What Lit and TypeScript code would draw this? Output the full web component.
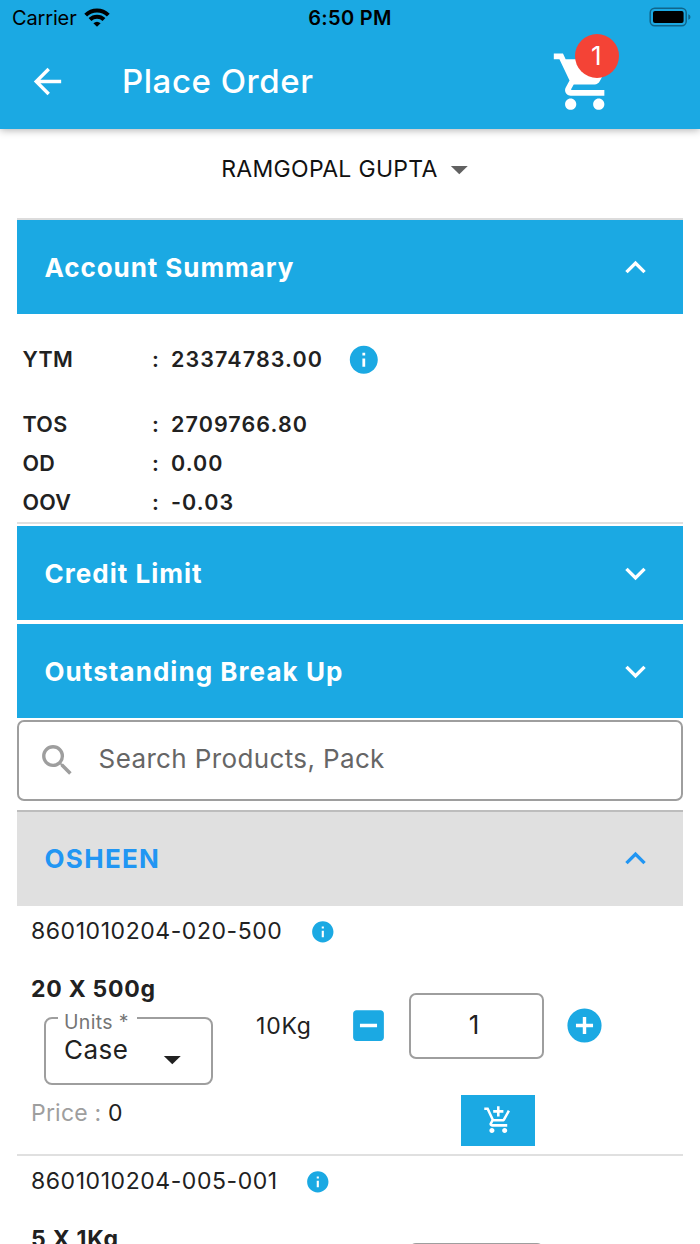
import { LitElement, html, css, svg } from "lit";

const ICONS = {
  back: "M20 11H7.83l5.59-5.59L12 4l-8 8 8 8 1.41-1.41L7.83 13H20v-2z",
  cart: "M7 18c-1.1 0-1.99.9-1.99 2S5.9 22 7 22s2-.9 2-2-.9-2-2-2zM1 2v2h2l3.6 7.59-1.35 2.45c-.16.28-.25.61-.25.96 0 1.1.9 2 2 2h12v-2H7.42c-.14 0-.25-.11-.25-.25l.03-.12.9-1.63h7.45c.75 0 1.41-.41 1.75-1.03l3.58-6.49A1.003 1.003 0 0 0 20 4H5.21l-.94-2H1zm16 16c-1.1 0-1.99.9-1.99 2s.89 2 1.99 2 2-.9 2-2-.9-2-2-2z",
  up: "M12 8l-6 6 1.41 1.41L12 10.83l4.59 4.58L18 14z",
  down: "M16.59 8.59L12 13.17 7.41 8.59 6 10l6 6 6-6z",
  info: "M12 2C6.48 2 2 6.48 2 12s4.48 10 10 10 10-4.48 10-10S17.52 2 12 2zm1 15h-2v-6h2v6zm0-8h-2V7h2v2z",
  search: "M15.5 14h-.79l-.28-.27A6.471 6.471 0 0 0 16 9.5 6.5 6.5 0 1 0 9.5 16c1.61 0 3.09-.59 4.23-1.57l.27.28v.79l5 4.99L20.49 19l-4.99-5zm-6 0C7.01 14 5 11.99 5 9.5S7.01 5 9.5 5 14 7.01 14 9.5 11.99 14 9.5 14z",
  dropdown: "M7 10l5 5 5-5z",
  minus: "M19 3H5c-1.11 0-2 .9-2 2v14c0 1.1.89 2 2 2h14c1.1 0 2-.9 2-2V5c0-1.1-.9-2-2-2zm-2 10H7v-2h10v2z",
  plus: "M12 2C6.48 2 2 6.48 2 12s4.48 10 10 10 10-4.48 10-10S17.52 2 12 2zm5 11h-4v4h-2v-4H7v-2h4V7h2v4h4v2z",
  addCart: "M11 9h2V6h3V4h-3V1h-2v3H8v2h3v3zm-4 9c-1.1 0-1.99.9-1.99 2S5.9 22 7 22s2-.9 2-2-.9-2-2-2zm10 0c-1.1 0-1.99.9-1.99 2s.89 2 1.99 2 2-.9 2-2-.9-2-2-2zm-9.83-3.25l.03-.12.9-1.63h7.45c.75 0 1.41-.41 1.75-1.03l3.86-7.01L19.42 4h-.01l-1.1 2-2.76 5H8.53l-.13-.27L6.16 6l-.95-2-.94-2H1v2h2l3.6 7.59-1.35 2.45c-.16.28-.25.61-.25.96 0 1.1.9 2 2 2h12v-2H7.42c-.13 0-.25-.11-.25-.25z",
};

const icon = (name: keyof typeof ICONS, cls = "") =>
  html`<svg class="icon ${cls}" viewBox="0 0 24 24">${svg`<path d=${ICONS[name]} />`}</svg>`;

interface Product { code: string; pack: string; weight: string; unit: string; qty: number; price: number; }

class ProductItem extends LitElement {
  static properties = { product: { attribute: false } };
  declare product: Product;

  static styles = css`
    :host { display: block; height: 248px; border-bottom: 2px solid #e0e0e0; color: #212121; font-size: 23px; line-height: 28px; }
    .icon { display: block; flex: none; fill: #1ba9e3; }
    .code-row { display: flex; align-items: center; height: 50px; padding: 0 0 2px 14px; }
    .code { letter-spacing: 0.56px; }
    .info { width: 25.6px; height: 25.6px; margin-left: 27.7px; margin-top: 2px; }
    .body { display: flex; align-items: flex-start; height: 196px; padding-left: 14px; }
    .details { width: 225px; padding-top: 17px; }
    .pack { font-weight: 700; letter-spacing: 0.75px; }
    .units { box-sizing: border-box; position: relative; width: 169px; height: 68px; margin: 14px 0 0 12.5px; padding: 15px 18px 0 18.5px; border: 2px solid #9e9e9e; border-radius: 8px; display: flex; justify-content: space-between; font-size: 26px; line-height: 32px; letter-spacing: 0.5px; }
    .units label { position: absolute; left: 12.5px; top: -10px; width: 79px; height: 26px; box-sizing: border-box; padding-left: 6px; background: #fff; font-size: 19.5px; line-height: 26px; letter-spacing: 0.35px; color: #757575; white-space: nowrap; }
    .units .icon { fill: #212121; width: 40.6px; height: 40.6px; margin-top: 5px; }
    .price { margin-top: 14px; letter-spacing: 0.2px; color: #9e9e9e; }
    .price span { color: #212121; }
    .weight { width: 92px; margin-top: 54px; letter-spacing: 0.8px; }
    .minus { width: 41px; height: 41px; margin-top: 47.3px; }
    .qty { box-sizing: border-box; width: 135px; height: 66px; margin: 35px 0 0 20px; border: 2px solid #9e9e9e; border-radius: 7px; display: flex; align-items: center; justify-content: center; font-size: 26px; padding-right: 5px; padding-bottom: 2px; }
    .plus { width: 41px; height: 41px; margin: 47.3px 0 0 20px; }
    .order { display: flex; align-items: flex-start; flex-wrap: wrap; width: 420px; align-content: flex-start; }
    .add { width: 74px; height: 51px; margin: 36px 0 0 205px; background: #1ba9e3; display: flex; align-items: center; justify-content: center; }
    .add .icon { fill: #fff; width: 30.6px; height: 30.6px; }
  `;

  render() {
    const p = this.product;
    return html`
      <div class="code-row"><span class="code">${p.code}</span>${icon("info", "info")}</div>
      <div class="body">
        <div class="details">
          <div class="pack">${p.pack}</div>
          <div class="units"><label>Units *</label><span>${p.unit}</span>${icon("dropdown")}</div>
          <div class="price">Price : <span>${p.price}</span></div>
        </div>
        <div class="order">
          <div class="weight">${p.weight}</div>
          ${icon("minus", "minus")}
          <div class="qty">${p.qty}</div>
          ${icon("plus", "plus")}
          <div class="add">${icon("addCart")}</div>
        </div>
      </div>
    `;
  }
}
customElements.define("product-item", ProductItem);

const PRODUCTS: Product[] = [
  { code: "8601010204-020-500", pack: "20 X 500g", weight: "10Kg", unit: "Case", qty: 1, price: 0 },
  { code: "8601010204-005-001", pack: "5 X 1Kg", weight: "5Kg", unit: "Case", qty: 1, price: 0 },
];

const SUMMARY = [
  { label: "YTM", value: "23374783.00", info: true },
  { label: "TOS", value: "2709766.80", info: false },
  { label: "OD", value: "0.00", info: false },
  { label: "OOV", value: "-0.03", info: false },
];

class AppRoot extends LitElement {
  static styles = css`
    :host { display: block; height: 1244px; overflow: hidden; background: #fff; font-family: Inter, "Liberation Sans", sans-serif; color: #212121; }
    .icon { display: block; flex: none; fill: currentColor; }
    header { height: 128.5px; background: #1ba9e3; box-shadow: 0 1px 8px rgba(0, 0, 0, 0.32); }
    .status { display: grid; grid-template-columns: 1fr auto 1fr; align-items: center; height: 36px; padding: 0 9px 0 12px; color: #000; font-size: 20px; }
    .carrier { display: flex; align-items: center; gap: 7.5px; letter-spacing: -0.15px; }
    .wifi { width: 26px; height: 19px; margin-top: -2px; }
    .clock { font-weight: 600; letter-spacing: 0.3px; margin-right: 3px; }
    .battery { width: 42px; height: 20px; justify-self: end; margin-top: -2px; display: block; }
    .bar { display: flex; align-items: center; height: 91px; color: #fff; padding-left: 27px; }
    .back { width: 41px; height: 41px; }
    h1 { margin: 0 0 2px 54px; width: 429px; font-size: 33px; font-weight: 500; letter-spacing: 0.55px; line-height: 40px; }
    .cart { position: relative; width: 67.4px; height: 67.4px; }
    .cart .icon { width: 67.4px; height: 67.4px; }
    .badge { position: absolute; left: 23.8px; top: -14px; width: 44px; height: 44px; border-radius: 50%; background: #f44336; display: flex; align-items: center; justify-content: center; font-size: 26px; padding-right: 1px; box-sizing: border-box; }
    .customer { display: flex; align-items: center; justify-content: center; height: 81px; font-size: 23px; letter-spacing: 0.3px; color: #111; padding-left: 0.5px; }
    .customer .icon { width: 40.6px; height: 40.6px; color: #616161; margin-left: 1px; }
    main { padding: 8.5px 17px 0; display: flex; flex-direction: column; }
    .panel { display: flex; align-items: center; justify-content: space-between; height: 94px; background: #1ba9e3; color: #fff; font-size: 26px; font-weight: 700; letter-spacing: 1.02px; padding: 0 27px 0 27.5px; }
    .panel .icon { width: 41px; height: 41px; }
    .panel.first { border-top: 2px solid #dcdcdc; }
    .panel.first span { letter-spacing: 0.93px; }
    .panel.next { margin-top: 4px; letter-spacing: 1.05px; }
    .panel.group { box-sizing: border-box; height: 96px; padding-bottom: 2px; background: #e0e0e0; color: #2196f3; border-top: 2px solid #bdbdbd; margin-top: 9px; }
    .panel.group span { letter-spacing: 1.3px; }
    .summary { height: 208px; border-bottom: 2px solid #e0e0e0; margin-bottom: 2px; font-size: 21.5px; font-weight: 600; padding-left: 5.5px; display: flex; flex-direction: column; }
    .entry { display: flex; align-items: center; height: 39px; }
    .entry.wide { box-sizing: border-box; height: 90px; padding-bottom: 1px; }
    .label { width: 129.5px; letter-spacing: 0.3px; }
    .colon { width: 19px; }
    .amount { letter-spacing: 1.1px; }
    .entry .icon { width: 33.6px; height: 33.6px; color: #1ba9e3; margin-left: 23.8px; margin-top: 2px; }
    .search { box-sizing: border-box; height: 81px; margin-top: 2px; border: 2px solid #9e9e9e; border-radius: 7px; display: flex; align-items: center; font-size: 26px; letter-spacing: 0.37px; color: #666; padding: 0 0 4px 18px; }
    .search .icon { width: 40.6px; height: 40.6px; color: #9e9e9e; margin-right: 21px; margin-top: 4px; }
  `;

  render() {
    return html`
      <header>
        <div class="status">
          <div class="carrier">
            <span>Carrier</span>
            <svg class="wifi" viewBox="0 0 26 19">
              <g fill="none" stroke="#000" stroke-width="4">
                <path d="M1.7 7.2A16 16 0 0 1 24.3 7.2" />
                <path d="M6 11.5A10 10 0 0 1 20 11.5" />
              </g>
              <path d="M13 18.8L9.4 15.3A5.6 5.6 0 0 1 16.6 15.3Z" />
            </svg>
          </div>
          <span class="clock">6:50 PM</span>
          <svg class="battery" viewBox="0 0 42 20">
            <rect x="1.2" y="1.2" width="36" height="17.6" rx="4.5" fill="none" stroke="#10658a" stroke-width="1.5" />
            <rect x="4" y="4" width="30.6" height="12" rx="2" fill="#000" />
            <path d="M39.3 7.2Q41.5 8 41.5 10T39.3 12.8Z" fill="#10658a" />
          </svg>
        </div>
        <div class="bar">
          ${icon("back", "back")}
          <h1>Place Order</h1>
          <div class="cart">${icon("cart")}<span class="badge">1</span></div>
        </div>
      </header>
      <div class="customer"><span>RAMGOPAL GUPTA</span>${icon("dropdown")}</div>
      <main>
        <div class="panel first"><span>Account Summary</span>${icon("up")}</div>
        <section class="summary">
          ${SUMMARY.map((r) => html`
            <div class="entry ${r.info ? "wide" : ""}">
              <span class="label">${r.label}</span><span class="colon">:</span>
              <span class="amount">${r.value}</span>${r.info ? icon("info") : ""}
            </div>`)}
        </section>
        <div class="panel"><span>Credit Limit</span>${icon("down")}</div>
        <div class="panel next"><span>Outstanding Break Up</span>${icon("down")}</div>
        <div class="search">${icon("search")}<span>Search Products, Pack</span></div>
        <div class="panel group"><span>OSHEEN</span>${icon("up")}</div>
        ${PRODUCTS.map((p) => html`<product-item .product=${p}></product-item>`)}
      </main>
    `;
  }
}
customElements.define("app-root", AppRoot);
